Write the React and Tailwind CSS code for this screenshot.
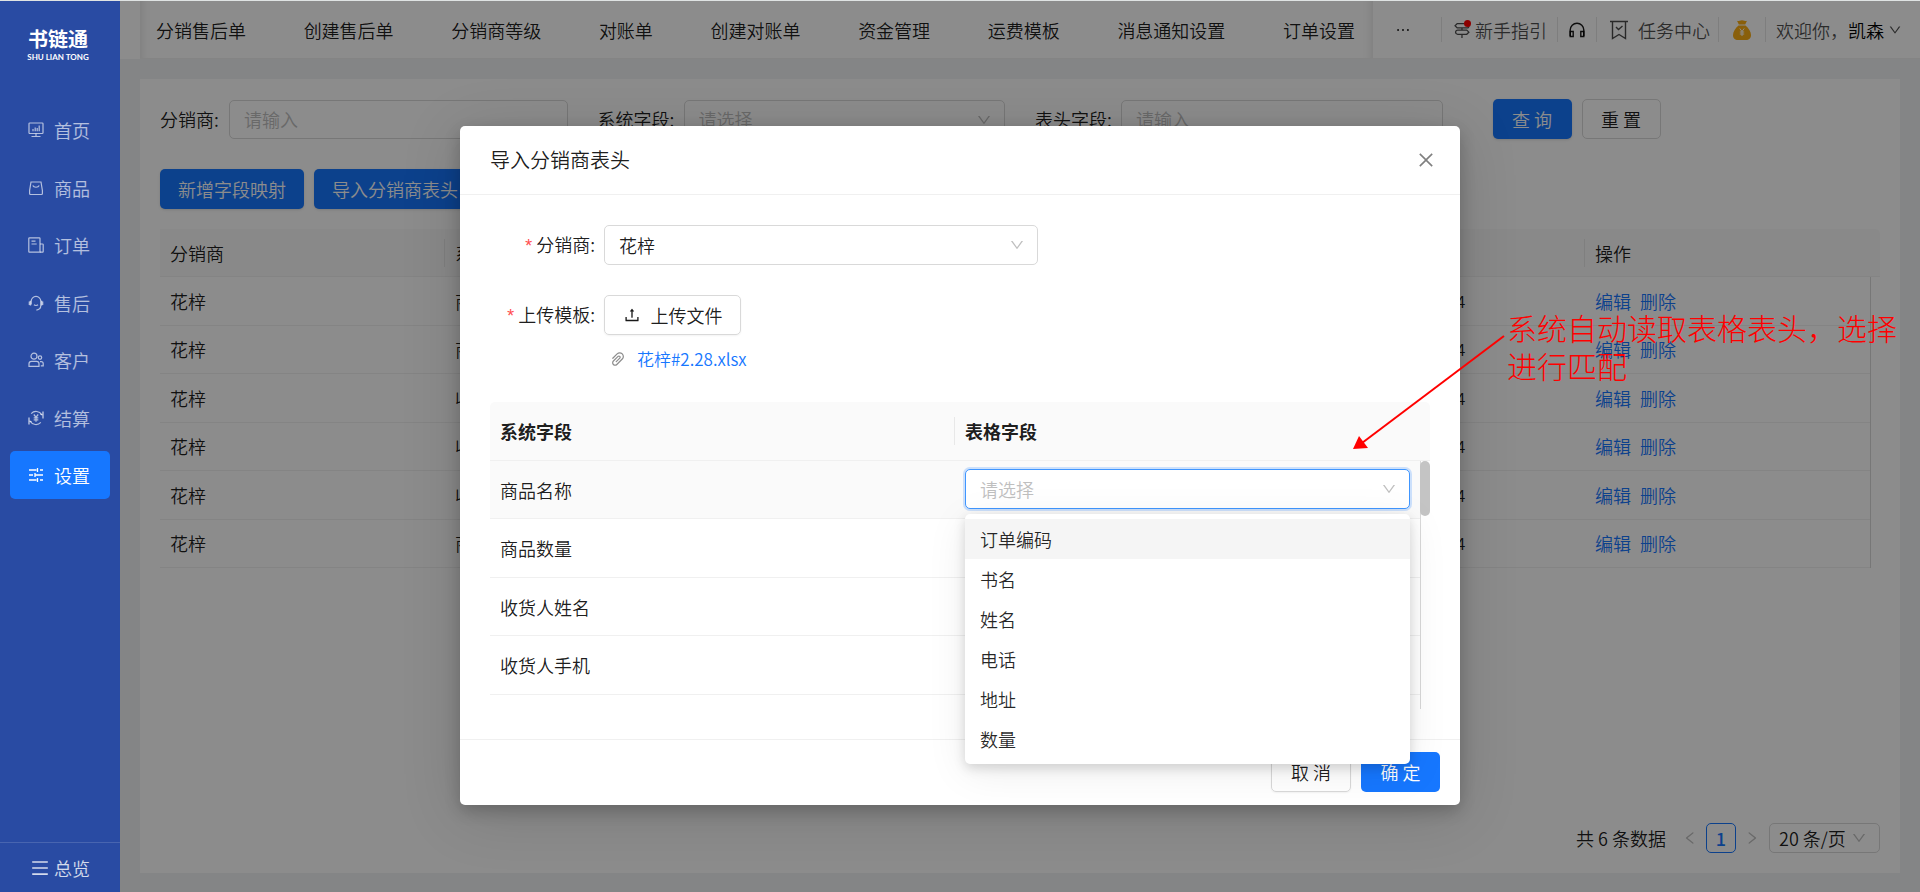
import React, { useState } from "react";
import {
  AiOutlineClose,
  AiOutlineDown,
  AiOutlineEllipsis,
  AiOutlineLeft,
  AiOutlineMenu,
  AiOutlinePaperClip,
  AiOutlineRight,
  AiOutlineUpload,
} from "react-icons/ai";

const topTabs = [
  "分销售后单",
  "创建售后单",
  "分销商等级",
  "对账单",
  "创建对账单",
  "资金管理",
  "运费模板",
  "消息通知设置",
  "订单设置",
];

const mappings = [
  { id: 1, dealer: "花梓", field: "商品名称", time: "2025-02-28 16:21:24" },
  { id: 2, dealer: "花梓", field: "商品数量", time: "2025-02-28 16:21:24" },
  { id: 3, dealer: "花梓", field: "收货人姓名", time: "2025-02-28 16:21:24" },
  { id: 4, dealer: "花梓", field: "收货人手机", time: "2025-02-28 16:21:24" },
  { id: 5, dealer: "花梓", field: "收货人地址", time: "2025-02-28 16:21:24" },
  { id: 6, dealer: "花梓", field: "商品编码", time: "2025-02-28 16:21:24" },
];

const systemFields = ["商品名称", "商品数量", "收货人姓名", "收货人手机"];
const sheetHeaders = ["订单编码", "书名", "姓名", "电话", "地址", "数量"];

const Svg = ({ children }) => (
  <svg
    viewBox="0 0 16 16"
    className="size-4"
    fill="none"
    stroke="currentColor"
    strokeWidth="1.2"
    aria-hidden="true"
  >
    {children}
  </svg>
);

const HomeIcon = () => (
  <Svg>
    <rect x="1" y="1" width="14" height="10.5" rx="0.8" />
    <path d="M5 9.2V7M7.2 9.200V5.500M9.200 9.200V6M11.200 9.200V3.600M8 11.500v3M3.500 14.500h9" />
  </Svg>
);

const GoodsIcon = () => (
  <Svg>
    <path d="M3 2h10l1.400 8.500v3a1 1 0 0 1-1 1H2.600a1 1 0 0 1-1-1v-3z" />
    <path d="M4.800 5.500c1 2.300 5.400 2.300 6.400 0" />
  </Svg>
);

const OrderIcon = () => (
  <Svg>
    <path d="M12 15.200H1.500a.7.7 0 0 1-.7-.7V1.500a.7.7 0 0 1 .7-.7h9.800a.7.7 0 0 1 .7.700v13.700z" />
    <path d="M12 7h2.500a.7.7 0 0 1 .7.700v6.800a.7.7 0 0 1-.7.700H12M3.500 4.200h4M3.500 7h5.200" />
  </Svg>
);

const ServiceIcon = () => (
  <Svg>
    <path d="M3.200 9.500V6.200a4.800 4.800 0 0 1 9.600 0v4.300c0 2.600-1.600 4.200-4.400 4.600" />
    <path d="M1.400 6.500v3.400M2.400 5.800v4.800M14.600 6.500v3.400M13.600 5.800v4.800" strokeWidth="1.4" />
    <path d="M6 9.800c1 .9 3 .9 4 0" />
  </Svg>
);

const CustomerIcon = () => (
  <Svg>
    <circle cx="6" cy="4.200" r="3" />
    <path d="M1 14.300v-2.500a2.500 2.500 0 0 1 2.500-2.500h5a2.500 2.500 0 0 1 2.500 2.500v2.500z" />
    <circle cx="12" cy="5.600" r="1.700" />
    <path d="M12 9.600h1.200a2 2 0 0 1 2 2v2.200h-2.400" />
  </Svg>
);

const SettleIcon = () => (
  <Svg>
    <path d="M3.200 3.600a6.600 6.600 0 0 1 10.600 1.200M12.800 12.400A6.600 6.600 0 0 1 2.200 11.200" />
    <path d="M15 1.500v7M15 5.200l-2.500-1M1 14.500v-7M1 10.800l2.500 1" strokeWidth="1.4" />
    <path d="M5.800 4.500L8 7.200l2.200-2.700M8 7.200v4.600M5.700 7.800h4.600M5.700 9.800h4.600" />
  </Svg>
);

const SettingIcon = () => (
  <Svg>
    <path
      d="M1 3h7.500M12 3h3M9.500 1v4M1 8h4M7.500 8H15M7 6v4M1 13h7.500M12 13h3M9.500 11v4"
      strokeWidth="1.3"
    />
  </Svg>
);

const sideMenu = [
  { label: "首页", icon: HomeIcon },
  { label: "商品", icon: GoodsIcon },
  { label: "订单", icon: OrderIcon },
  { label: "售后", icon: ServiceIcon },
  { label: "客户", icon: CustomerIcon },
  { label: "结算", icon: SettleIcon },
  { label: "设置", icon: SettingIcon, active: true },
];

const Sidebar = () => (
  <aside className="relative z-20 flex w-[120px] shrink-0 flex-col bg-[#294ba3] text-white">
    <div className="mt-[26px] flex flex-col items-center pr-1">
      <span className="text-xl leading-6 font-bold">书链通</span>
      <span className="font-['Lato'] text-[8px] leading-3 font-bold">SHU LIAN TONG</span>
    </div>
    <nav className="mx-[10px] mt-[43px] flex h-[393px] flex-col justify-between">
      {sideMenu.map(({ label, icon: Icon, active }) => (
        <a
          key={label}
          href="#"
          className={
            active
              ? "flex h-12 items-center gap-[10px] rounded-[5px] bg-[#1677ff] pl-[18px] text-lg text-white"
              : "flex h-12 items-center gap-[10px] rounded-[5px] pl-[18px] text-lg text-white/65"
          }
        >
          <Icon />
          {label}
        </a>
      ))}
    </nav>
    <button className="mt-auto flex h-[50px] items-center gap-1 border-t border-white/15 pl-[30px] text-lg text-white/80">
      <AiOutlineMenu className="size-5" />
      总览
    </button>
  </aside>
);

const Divider = () => <span className="h-[25px] w-px bg-black/10" />;

const Header = () => (
  <header className="flex h-[58px] shrink-0 items-center bg-white pl-5">
    <nav className="flex h-full flex-1 items-center justify-between border-b border-[#f0f0f0] pr-[18px] pl-4 text-lg whitespace-nowrap shadow-[inset_10px_0_8px_-8px_rgba(0,0,0,0.1),inset_-10px_0_8px_-8px_rgba(0,0,0,0.1)]">
      {topTabs.map((tab) => (
        <a key={tab} href="#">
          {tab}
        </a>
      ))}
    </nav>
    <div className="flex h-full w-[547px] items-center border-b border-[#f0f0f0] text-lg whitespace-nowrap text-black/70">
      <button aria-label="更多" className="flex w-[68px] justify-center pr-2 text-black/90">
        <AiOutlineEllipsis className="size-[18px]" />
      </button>
      <Divider />
      <a href="#" className="flex items-center gap-1 pr-[10px] pl-3">
        <span className="relative">
          <svg
            viewBox="0 0 16 16"
            className="size-[17px]"
            fill="none"
            stroke="currentColor"
            strokeWidth="1.2"
            aria-hidden="true"
          >
            <path d="M10 2.500H3L1 4.500l2 2h9.500a1.500 1.500 0 0 0 1.500-1.500M3.500 8.500h8.500l2 2-2 2H3.500a2 2 0 0 1 0-4zM7.500 6.500v2M7.500 12.500V16" />
          </svg>
          <span className="absolute -top-px right-0 size-[7px] rounded-full bg-[#ff0000]" />
        </span>
        新手指引
      </a>
      <Divider />
      <button aria-label="客服" className="px-[11px] text-black/90">
        <svg
          viewBox="0 0 16 16"
          className="size-4"
          fill="none"
          stroke="currentColor"
          strokeWidth="1.4"
          aria-hidden="true"
        >
          <path d="M1.200 14V8a6.800 6.800 0 0 1 13.600 0v6" />
          <path d="M1.200 9.500h3v5h-3zM11.800 9.500h3v5h-3z" />
        </svg>
      </button>
      <Divider />
      <a href="#" className="flex items-center gap-[10px] pr-2 pl-[13px]">
        <svg
          viewBox="0 0 18 20"
          className="h-5 w-[18px]"
          fill="none"
          stroke="currentColor"
          strokeWidth="1.4"
          aria-hidden="true"
        >
          <path d="M0 1.500h18M2.500 1.500v17l6.500-4 6.500 4v-17M6 7l2.500 2.500L12.500 6" />
        </svg>
        任务中心
      </a>
      <Divider />
      <button aria-label="账户余额" className="px-[14px]">
        <svg viewBox="0 0 18 20" className="h-5 w-[18px]" aria-hidden="true">
          <path
            d="M4 .8c1.500.9 2.500-.6 5-.6s3.500 1.500 5 .6L12.200 4.500H5.800zM5.500 5.500h7C15.500 8 18 11.500 18 15c0 3.500-2 5-5 5H5c-3 0-5-1.500-5-5 0-3.500 2.500-7 5.500-9.500z"
            fill="#faad14"
          />
          <path
            d="M6.800 8.500L9 11.500l2.200-3M9 11.500V16M6.800 12h4.400M6.800 14h4.400"
            stroke="#fff"
            fill="none"
          />
        </svg>
      </button>
      <Divider />
      <button className="flex items-center pl-[10px]">
        欢迎你，
        <span className="text-black">凯森</span>
        <AiOutlineDown className="ml-1 size-[14px]" />
      </button>
    </div>
  </header>
);

const Filters = () => (
  <form className="grid grid-cols-4 gap-[30px] text-lg">
    <div className="flex items-center">
      <label htmlFor="dealer" className="w-[69px] shrink-0">
        分销商:
      </label>
      <input
        id="dealer"
        placeholder="请输入"
        className="h-[39px] w-full rounded-[5px] border border-[#d9d9d9] px-[14px] placeholder:text-[#bfbfbf]"
      />
    </div>
    <div className="flex items-center">
      <label htmlFor="system-field" className="w-[86px] shrink-0">
        系统字段:
      </label>
      <div className="relative w-full">
        <select
          id="system-field"
          className="h-[39px] w-full appearance-none rounded-[5px] border border-[#d9d9d9] px-[14px] text-[#bfbfbf]"
        >
          <option>请选择</option>
        </select>
        <AiOutlineDown className="pointer-events-none absolute top-3 right-[13px] size-4 text-[#bfbfbf]" />
      </div>
    </div>
    <div className="flex items-center">
      <label htmlFor="header-field" className="w-[86px] shrink-0">
        表头字段:
      </label>
      <input
        id="header-field"
        placeholder="请输入"
        className="h-[39px] w-full rounded-[5px] border border-[#d9d9d9] px-[14px] placeholder:text-[#bfbfbf]"
      />
    </div>
    <div className="flex items-start gap-[10px] pl-5">
      <button type="button" className="h-10 w-[79px] rounded-[5px] bg-[#1677ff] text-white shadow-sm">
        查 询
      </button>
      <button type="button" className="h-10 w-[79px] rounded-[5px] border border-[#d9d9d9] bg-white">
        重 置
      </button>
    </div>
  </form>
);

const HeadRule = () => (
  <span className="absolute top-1/2 right-0 h-7 w-px -translate-y-1/2 bg-[#e8e8e8]" />
);

const HeadCell = ({ children }) => (
  <th className="relative border-b border-[#f0f0f0] bg-[#fafafa] px-[10px] text-left font-[350]">
    {children}
  </th>
);

const MappingTable = () => (
  <table className="h-[339px] w-full table-fixed border-separate border-spacing-0 text-lg">
    <colgroup>
      <col />
      <col />
      <col />
      <col />
      <col />
      <col />
      <col className="w-[10px]" />
    </colgroup>
    <thead>
      <tr className="h-12">
        <HeadCell>分销商<HeadRule /></HeadCell>
        <HeadCell>系统字段<HeadRule /></HeadCell>
        <HeadCell />
        <HeadCell />
        <HeadCell><HeadRule /></HeadCell>
        <HeadCell>操作</HeadCell>
        <td className="rounded-tr-[5px] border-b border-[#f0f0f0] bg-[#fafafa]" />
      </tr>
    </thead>
    <tbody>
      {mappings.map((row) => (
        <tr key={row.id} className="h-12">
          <td className="border-b border-[#f0f0f0] px-[10px]">{row.dealer}</td>
          <td className="border-b border-[#f0f0f0] px-[10px]">{row.field}</td>
          <td className="border-b border-[#f0f0f0]" />
          <td className="border-b border-[#f0f0f0]" />
          <td className="border-b border-[#f0f0f0] px-[10px] text-[17px] whitespace-nowrap">
            {row.time}
          </td>
          <td className="border-b border-[#f0f0f0] px-[10px] text-[#1677ff]">
            <a href="#" className="mr-[9px]">编辑</a>
            <a href="#">删除</a>
          </td>
          <td className="border-l border-[#d9d9d9]" />
        </tr>
      ))}
    </tbody>
  </table>
);

const Pagination = () => (
  <div className="mt-auto flex h-[30px] items-center justify-end text-lg">
    <span>共 6 条数据</span>
    <button aria-label="上一页" className="ml-4 text-black/25">
      <AiOutlineLeft className="size-4" />
    </button>
    <button className="mx-2 size-[30px] rounded-[5px] border border-[#1677ff] font-medium text-[#1677ff]">
      1
    </button>
    <button aria-label="下一页" className="text-black/25">
      <AiOutlineRight className="size-4" />
    </button>
    <div className="relative ml-[9px]">
      <select
        aria-label="每页条数"
        className="h-[30px] w-[111px] appearance-none rounded-[5px] border border-[#d9d9d9] pl-[9px] leading-6"
      >
        <option>20 条/页</option>
      </select>
      <AiOutlineDown className="pointer-events-none absolute top-[7px] right-[13px] size-4 text-black/25" />
    </div>
  </div>
);

const FieldDropdown = ({ onPick }) => (
  <ul
    role="listbox"
    aria-label="表格字段"
    className="absolute top-[45px] left-0 z-10 w-full rounded-[5px] bg-white py-[5px] text-black/85 shadow-[0_4px_12px_rgba(0,0,0,0.15),0_8px_40px_rgba(0,0,0,0.08)]"
  >
    {sheetHeaders.map((name, index) => (
      <li
        key={name}
        role="option"
        aria-selected={false}
        onClick={() => onPick(name)}
        className={
          index === 0
            ? "flex h-10 items-center bg-[#f5f5f5] px-[15px]"
            : "flex h-10 items-center px-[15px]"
        }
      >
        {name}
      </li>
    ))}
  </ul>
);

const Required = () => (
  <span className="mr-[2px] font-['Liberation_Mono'] text-[#ff4d4f]">*</span>
);

const ImportModal = () => {
  const [picked, setPicked] = useState("");

  return (
    <div
      role="dialog"
      aria-label="导入分销商表头"
      className="w-[1000px] rounded-[5px] bg-white text-lg text-black/90 shadow-[0_6px_16px_rgba(0,0,0,0.2),0_9px_60px_rgba(0,0,0,0.15)]"
    >
      <div className="flex h-[69px] items-center justify-between border-b border-[#f0f0f0] pr-6 pl-[30px]">
        <h2 className="text-xl">导入分销商表头</h2>
        <button aria-label="关闭" className="text-black/50">
          <AiOutlineClose className="size-5" />
        </button>
      </div>

      <div className="px-[30px] py-[30px]">
        <div className="mb-[30px] flex items-center">
          <label htmlFor="modal-dealer" className="w-[114px] pr-[9px] text-right">
            <Required />分销商:
          </label>
          <div className="relative w-[434px]">
            <select
              id="modal-dealer"
              className="h-10 w-full appearance-none rounded-[5px] border border-[#d9d9d9] px-[14px]"
            >
              <option>花梓</option>
            </select>
            <AiOutlineDown className="pointer-events-none absolute top-3 right-[13px] size-4 text-[#bfbfbf]" />
          </div>
        </div>

        <div className="flex items-center">
          <label htmlFor="upload" className="w-[114px] pr-[9px] text-right whitespace-nowrap">
            <Required />上传模板:
          </label>
          <button
            id="upload"
            className="flex h-10 w-[137px] items-center justify-center gap-[10px] rounded-[5px] border border-[#d9d9d9] shadow-xs"
          >
            <AiOutlineUpload className="size-[18px]" />
            上传文件
          </button>
        </div>
        <div className="mt-[10px] mb-[29px] ml-[119px] flex h-7 items-center gap-[10px]">
          <AiOutlinePaperClip className="size-[18px] text-black/45" />
          <a href="#" className="text-[17px] text-[#1677ff]">花梓#2.28.xlsx</a>
        </div>

        <table className="w-full table-fixed border-separate border-spacing-0">
          <colgroup>
            <col className="w-[465px]" />
            <col />
            <col className="w-[10px]" />
          </colgroup>
          <thead>
            <tr className="h-[59px] bg-[#fafafa]">
              <th className="relative rounded-tl-[5px] border-b border-[#f0f0f0] px-[10px] text-left font-bold">
                系统字段
                <HeadRule />
              </th>
              <th className="border-b border-[#f0f0f0] px-[10px] text-left font-bold">表格字段</th>
              <td className="rounded-tr-[5px] border-b border-[#f0f0f0]" />
            </tr>
          </thead>
          <tbody>
            {systemFields.map((field, index) => (
              <tr
                key={field}
                className={index === 0 ? "h-[58px] bg-[#fafafa]" : "h-[58px] even:h-[59px]"}
              >
                <td className="border-b border-[#f0f0f0] px-[10px]">{field}</td>
                <td className="border-b border-[#f0f0f0] px-[10px] pt-2 align-top">
                  {index === 0 && (
                    <div className="relative h-10">
                      <select
                        aria-label={field}
                        value={picked}
                        onChange={(e) => setPicked(e.target.value)}
                        className="h-10 w-full appearance-none rounded-[5px] border border-[#4096ff] bg-white px-[14px] text-[#bfbfbf] ring-2 ring-[#1677ff]/20"
                      >
                        <option value="">请选择</option>
                        {sheetHeaders.map((name) => (
                          <option key={name}>{name}</option>
                        ))}
                      </select>
                      <AiOutlineDown className="pointer-events-none absolute top-3 right-[13px] size-4 text-[#bfbfbf]" />
                      <FieldDropdown onPick={setPicked} />
                    </div>
                  )}
                </td>
                {index === 0 && (
                  <td rowSpan={5} className="border-l border-[#d9d9d9] bg-white p-0 align-top">
                    <div className="-ml-px h-[55px] w-[10px] rounded-full bg-[#c4c4c4]" />
                  </td>
                )}
              </tr>
            ))}
            <tr className="h-[14px]">
              <td colSpan={2} />
            </tr>
          </tbody>
        </table>
      </div>

      <div className="flex justify-end gap-[10px] border-t border-[#f0f0f0] px-5 pt-3 pb-[13px]">
        <button className="h-10 w-20 rounded-[5px] border border-[#d9d9d9] shadow-xs">取 消</button>
        <button className="h-10 w-[79px] rounded-[5px] bg-[#1677ff] text-white">确 定</button>
      </div>
    </div>
  );
};

// Red callout pointing at the column select in the dialog
const Callout = () => (
  <div className="absolute top-[307px] left-[1350px] z-40 flex text-[#ff0000]">
    <svg viewBox="0 0 157 145" className="h-[145px] w-[157px]" aria-hidden="true">
      <path d="M154 28L12 135" stroke="currentColor" strokeWidth="2" fill="none" />
      <path d="M3 141l6-13 9 12z" fill="currentColor" />
    </svg>
    <p className="w-[400px] text-3xl leading-[38px] font-light">
      系统自动读取表格表头，选择
      <br />
      进行匹配
    </p>
  </div>
);

const App = () => {
  return (
    <div className="relative flex min-h-screen overflow-hidden border-t border-[#dfe3e3] bg-[#f0f2f5] font-['Noto_Sans_CJK_SC',sans-serif] font-[350] text-black/90">
      <Sidebar />
      <div className="flex min-w-0 flex-1 flex-col">
        <Header />
        <main className="m-5 mb-[19px] flex flex-1 flex-col bg-white p-5">
          <Filters />
          <div className="mt-[30px] mb-5 flex gap-[10px] text-lg text-white">
            <button className="h-10 rounded-[5px] bg-[#1677ff] px-[18px] shadow-sm">新增字段映射</button>
            <button className="h-10 rounded-[5px] bg-[#1677ff] px-[18px] shadow-sm">导入分销商表头</button>
          </div>
          <MappingTable />
          <Pagination />
        </main>
      </div>

      <div className="absolute inset-0 z-10 bg-black/45" />
      <div className="absolute inset-0 z-30 flex items-start justify-center pt-[125px]">
        <ImportModal />
      </div>
      <Callout />
    </div>
  );
};

export default App;
